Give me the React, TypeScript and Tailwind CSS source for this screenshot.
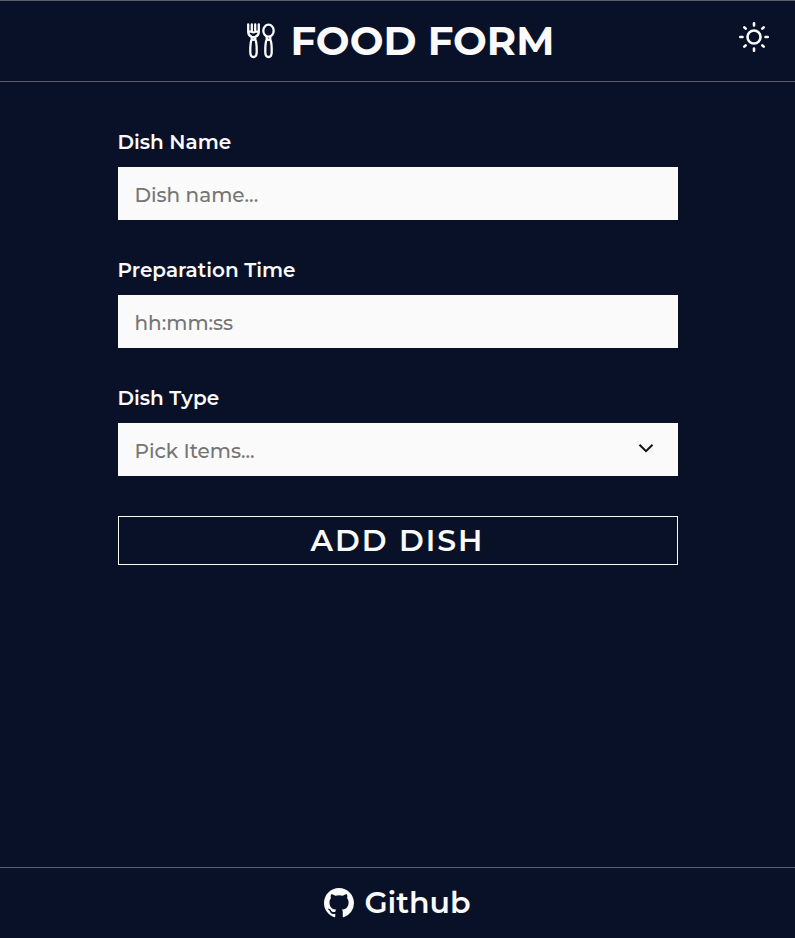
import { BsGithub } from "react-icons/bs";

function ForkSpoonIcon() {
  return (
    <svg viewBox="0 0 30 36" className="h-9 w-[30px] shrink-0" fill="none" stroke="currentColor" strokeWidth="2.3" strokeLinejoin="round" strokeLinecap="round">
      <path d="M2.2 1.4V9q.1 3.6 3.5 4.9V16.5C4.4 19 4.2 24 4.3 29.5q.2 4.5 3.2 4.5t3.2-4.5c.1-5.5-.1-10.5-1.4-13v-2.6Q12.7 12.6 12.8 9V1.4M5.8 1.4V8M9.2 1.4V8M2.2 8.6h3q2.3 1.4 4.6 0h3M5.7 13.8q1.8.5 3.6 0M5.7 16.5q1.8.5 3.6 0" />
      <ellipse cx="22.5" cy="7.7" rx="5.2" ry="6" />
      <path d="M20.7 13.6v2.9C19.4 19 19.2 24 19.3 29.5q.2 4.5 3.2 4.5t3.2-4.5c.1-5.5-.1-10.5-1.4-13v-2.9M20.7 16.5q1.8.5 3.6 0" />
    </svg>
  );
}

function SunIcon() {
  return (
    <svg viewBox="-16 -16 32 32" className="mr-[25px] mb-[9px] size-8 justify-self-end" fill="none" stroke="currentColor" strokeWidth="2.6" strokeLinecap="round">
      <circle r="6.5" />
      <path d="M0-13.7v2.2M0 11.5v2.2M-13.7 0h2.2M11.5 0h2.2M-9.7-9.7l1.4 1.4M9.7-9.7 8.3-8.3M-9.7 9.7l1.4-1.4M9.7 9.7 8.3 8.3" />
    </svg>
  );
}

function Field({ label, text, select }: { label: string; text: string; select?: boolean }) {
  return (
    <div>
      <label className="mb-2.5 block text-xl leading-[30px] font-semibold">{label}</label>
      <div className="flex h-[53px] items-center justify-between bg-[#fafafa] pr-[22px] pl-[17px] text-[#757575]">
        <span className="pt-[3px] text-xl leading-6 font-medium">{text}</span>
        {select && (
          <svg viewBox="0 0 20 20" className="mb-[3px] size-5" fill="none" stroke="#111" strokeWidth="2">
            <path d="m3.5 6.8 6.5 6.4 6.5-6.4" />
          </svg>
        )}
      </div>
    </div>
  );
}

export default function App() {
  return (
    <div className="flex h-[938px] w-full flex-col bg-[#091128] font-['Montserrat','Inter',sans-serif] text-[#fafafa]">
      <header className="grid h-[82px] grid-cols-[1fr_auto_1fr] items-center border-y border-[#5b5f6c]">
        <div />
        <div className="flex items-center gap-[14.5px] pl-[5.5px]">
          <ForkSpoonIcon />
          <h1 className="text-[40px] leading-10 font-bold whitespace-nowrap">FOOD FORM</h1>
        </div>
        <SunIcon />
      </header>
      <main className="mx-auto flex w-[560px] flex-1 flex-col gap-[35px] pt-[45px]">
        <Field label="Dish Name" text="Dish name..." />
        <Field label="Preparation Time" text="hh:mm:ss" />
        <Field label="Dish Type" text="Pick Items..." select />
        <button className="mt-[5px] flex h-[49px] w-full items-center justify-center border border-[#fafafa] text-3xl font-semibold tracking-[2px]">ADD DISH</button>
      </main>
      <footer className="flex h-[71px] items-center justify-center gap-2.5 border-t border-[#5b5f6c]">
        <BsGithub className="size-[30px]" />
        <span className="text-3xl leading-9 font-semibold">Github</span>
      </footer>
    </div>
  );
}
